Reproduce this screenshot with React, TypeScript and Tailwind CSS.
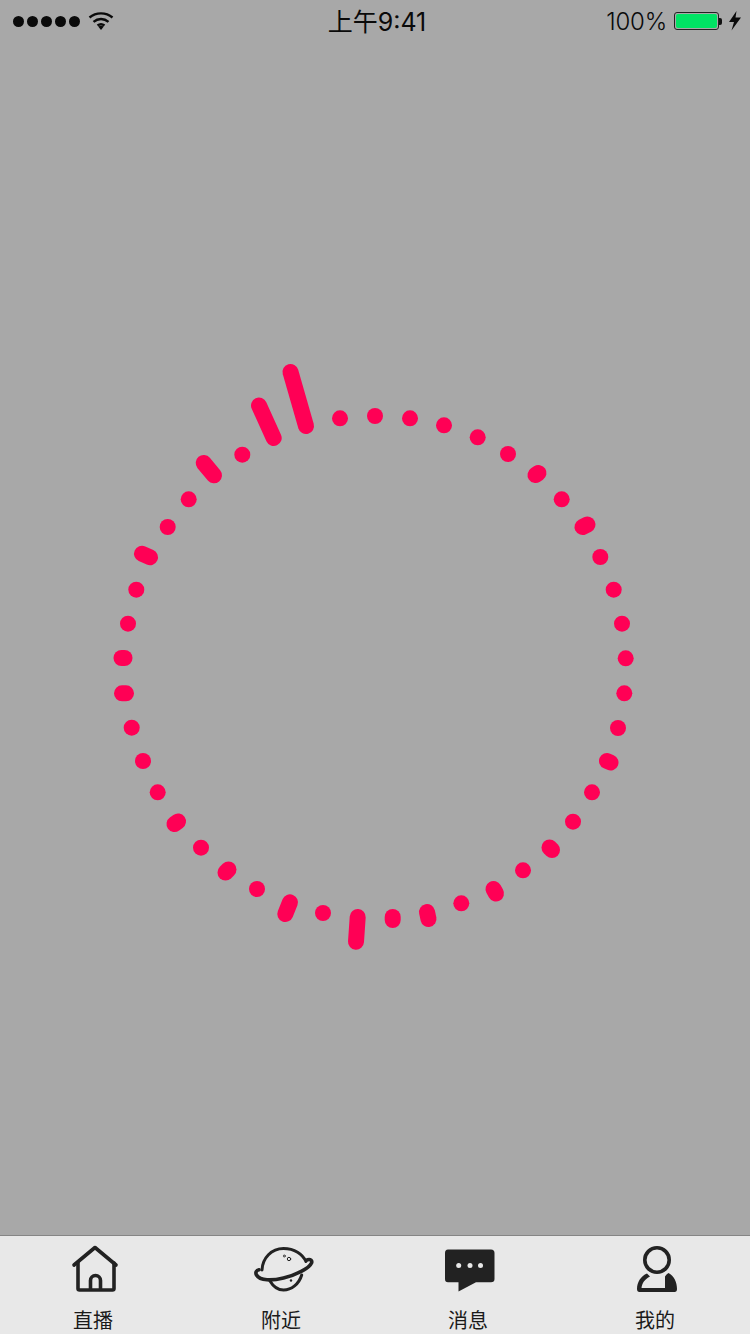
const segs: [number, number, number, number][] = [
  [290.5, 372, 306, 426], [259, 405.5, 273.7, 438], [242.3, 454.7, 242.3, 454.7], [203.7, 463, 214, 475.3],
  [188.7, 499.3, 188.7, 499.3], [167.7, 527, 167.7, 527], [142, 553.7, 150, 557.3], [136.3, 589.7, 136.3, 589.7],
  [128, 623.7, 128, 623.7], [121.5, 658, 124.5, 658], [122, 693.3, 126, 693.3], [131.7, 727.7, 131.7, 727.7],
  [143, 761, 143, 761], [157.7, 792.3, 157.7, 792.3], [174.5, 824, 178, 821.5], [201, 847.7, 201, 847.7],
  [225.5, 872.5, 228.5, 869.5], [257, 889, 257, 889], [290, 902.3, 285.3, 914], [323, 913, 323, 913],
  [357.7, 917, 356, 941.7], [392.7, 917, 392.7, 920], [427, 912, 428.5, 919], [461.3, 903.3, 461.3, 903.3],
  [493.5, 889, 496, 893.5], [523, 870.3, 523, 870.3], [549.5, 847.5, 552, 850], [573, 821.7, 573, 821.7],
  [592, 792.3, 592, 792.3], [607, 761, 610.5, 762.5], [618, 728, 618, 728], [624.3, 693.3, 624.3, 693.3],
  [625.7, 658.3, 625.7, 658.3], [622, 623.7, 622, 623.7], [613.7, 589.7, 613.7, 589.7], [600.3, 557, 600.3, 557],
  [582.5, 527, 587.5, 524.5], [561.7, 499.3, 561.7, 499.3], [535.5, 475, 538.5, 473], [508, 454, 508, 454],
  [477.7, 437.3, 477.7, 437.3], [444, 425.3, 444, 425.3], [410, 418.3, 410, 418.3], [375, 416, 375, 416], [340, 418.3, 340, 418.3],
];

const cjk = { fontFamily: '"Noto Sans CJK SC", sans-serif' };

function Signal() {
  return (
    <div className="flex gap-[3px]">
      {[0, 1, 2, 3, 4].map((i) => (
        <span key={i} className="w-[11px] h-[11px] rounded-full bg-[#0a0a0a]" />
      ))}
    </div>
  );
}

function Wifi() {
  return (
    <svg width="26" height="20" viewBox="0 0 26 20" fill="none" stroke="#0a0a0a" strokeWidth="2.4">
      <path d="M1.5 6.5C8 1 18 1 24.5 6.5" />
      <path d="M5.5 10.8C10 7 16 7 20.5 10.8" />
      <path d="M9.5 14.5C11.5 13 14.5 13 16.5 14.5" />
      <path d="M10.2 15.6L13 19L15.8 15.6Q13 14 10.2 15.6Z" fill="#0a0a0a" stroke="none" />
    </svg>
  );
}

function Battery() {
  return (
    <div className="flex items-center">
      <div className="w-[45px] h-[18px] rounded-[3px] border border-[#222222] p-[1px]">
        <div className="w-full h-full rounded-[2px] bg-[#00e364]" />
      </div>
      <div className="w-[3px] h-[7px] rounded-r-[2px] bg-[#111111]" />
    </div>
  );
}

function Bolt() {
  return (
    <svg width="12" height="20" viewBox="0 0 12 20">
      <path d="M7.5 0L0 11H5L2.5 19.5L12 6.5H6.5Z" fill="#0a0a0a" />
    </svg>
  );
}

function HomeIcon() {
  return (
    <svg width="50" height="50" viewBox="0 0 50 50" fill="none" stroke="#222222" strokeWidth="3.6" strokeLinecap="round" strokeLinejoin="round">
      <path d="M4 21L25 3.5L46 21" />
      <path d="M8 19V44.5Q8 46 9.5 46H42.5Q44 46 44 44.5V19" />
      <path d="M20.5 45V36.5A5 5 0 0 1 30.5 36.5V45" />
    </svg>
  );
}

function PlanetIcon() {
  return (
    <svg width="62" height="50" viewBox="0 0 62 50" fill="none" stroke="#222222" strokeLinecap="round">
      <path d="M10 26C10.500 14 19.500 4.500 31.500 4.500C42.500 4.500 50.500 10 54 17.500" strokeWidth="3" />
      <path d="M18 37C21.500 43 26 46 31.500 46C39.500 46 47 40 49.700 31" strokeWidth="3" />
      <path d="M55.500 15.800C58.500 15 60.500 16.500 59.500 19C57 24.500 44 31 31.500 34C20 36.800 8 37 4.500 31C3 28.300 4.500 26.300 7 25.800" strokeWidth="3.600" />
      <circle cx="37" cy="15" r="1.700" strokeWidth="1" />
      <circle cx="32.300" cy="12" r="1" strokeWidth="0.800" />
      <circle cx="39" cy="36.500" r="1.200" fill="#222222" stroke="none" />
    </svg>
  );
}

function ChatIcon() {
  return (
    <svg className="mt-[4px]" width="50" height="44" viewBox="0 0 50 44" fill="#222222">
      <path d="M3 0.500H46Q49.500 0.500 49.500 4V30Q49.500 33.300 46 33.300H31L13.500 42.500V33.300H3Q0 33.300 0 30V4Q0 0.500 3 0.500Z" />
      <circle cx="13.700" cy="16.500" r="2.500" fill="#e8e8e8" />
      <circle cx="25" cy="16.500" r="2.500" fill="#e8e8e8" />
      <circle cx="35.500" cy="16.500" r="2.500" fill="#e8e8e8" />
    </svg>
  );
}

function PersonIcon() {
  return (
    <svg width="42" height="48" viewBox="0 0 42 48" fill="none">
      <circle cx="21" cy="15" r="12.200" stroke="#222222" strokeWidth="3.600" />
      <path fill="#222222" d="M1 44C1 37 5 31 11 28.500L14 31.500C9 34 6 38 5.500 43H29V31.500C30 30 31 29 32.500 28C38 31 41 37 41 44Q41 47 38.500 47H3.500Q1 47 1 44Z" />
    </svg>
  );
}

const tabs = [
  { label: "直播", icon: <HomeIcon />, w: "w-[186px]" },
  { label: "附近", icon: <PlanetIcon />, w: "w-[190px]" },
  { label: "消息", icon: <ChatIcon />, w: "w-[184px]" },
  { label: "我的", icon: <PersonIcon />, w: "w-[190px]" },
];

export default function App() {
  return (
    <div className="w-[750px] h-[1334px] flex flex-col overflow-hidden bg-[#a8a8a8]">
      <div className="h-10 shrink-0 grid grid-cols-[1fr_auto_1fr] items-center pl-[13px] pr-[9px] text-[#0a0a0a]">
        <div className="flex items-center gap-[8px]">
          <Signal />
          <Wifi />
        </div>
        <div className="text-[25px] leading-[40px] pt-[2px] font-['Inter','Noto_Sans_CJK_SC',sans-serif]">上午9:41</div>
        <div className="flex items-center justify-end">
          <span className="text-[24px] leading-[40px] pt-[1px] font-light mr-[7px] tracking-[-0.2px] font-['Inter',sans-serif]">100%</span>
          <Battery />
          <span className="ml-[7px]"><Bolt /></span>
        </div>
      </div>
      <svg className="block grow" width="750" height="1195" viewBox="0 40 750 1195" fill="none">
        {segs.map(([a, b, c, d], i) => (
          <line key={i} x1={a} y1={b} x2={c} y2={d} stroke="#ff0055" strokeWidth="16" strokeLinecap="round" />
        ))}
      </svg>
      <div className="h-[99px] shrink-0 flex bg-[#e8e8e8] border-t border-[#858585]">
        {tabs.map((t) => (
          <div key={t.label} className={`${t.w} h-full flex flex-col items-center`}>
            <div className="h-[66px] ml-[4px] flex items-center justify-center">{t.icon}</div>
            <div className="text-[20px] leading-[28px] mt-[4px] text-[#1a1a1a]" style={cjk}>{t.label}</div>
          </div>
        ))}
      </div>
    </div>
  );
}
